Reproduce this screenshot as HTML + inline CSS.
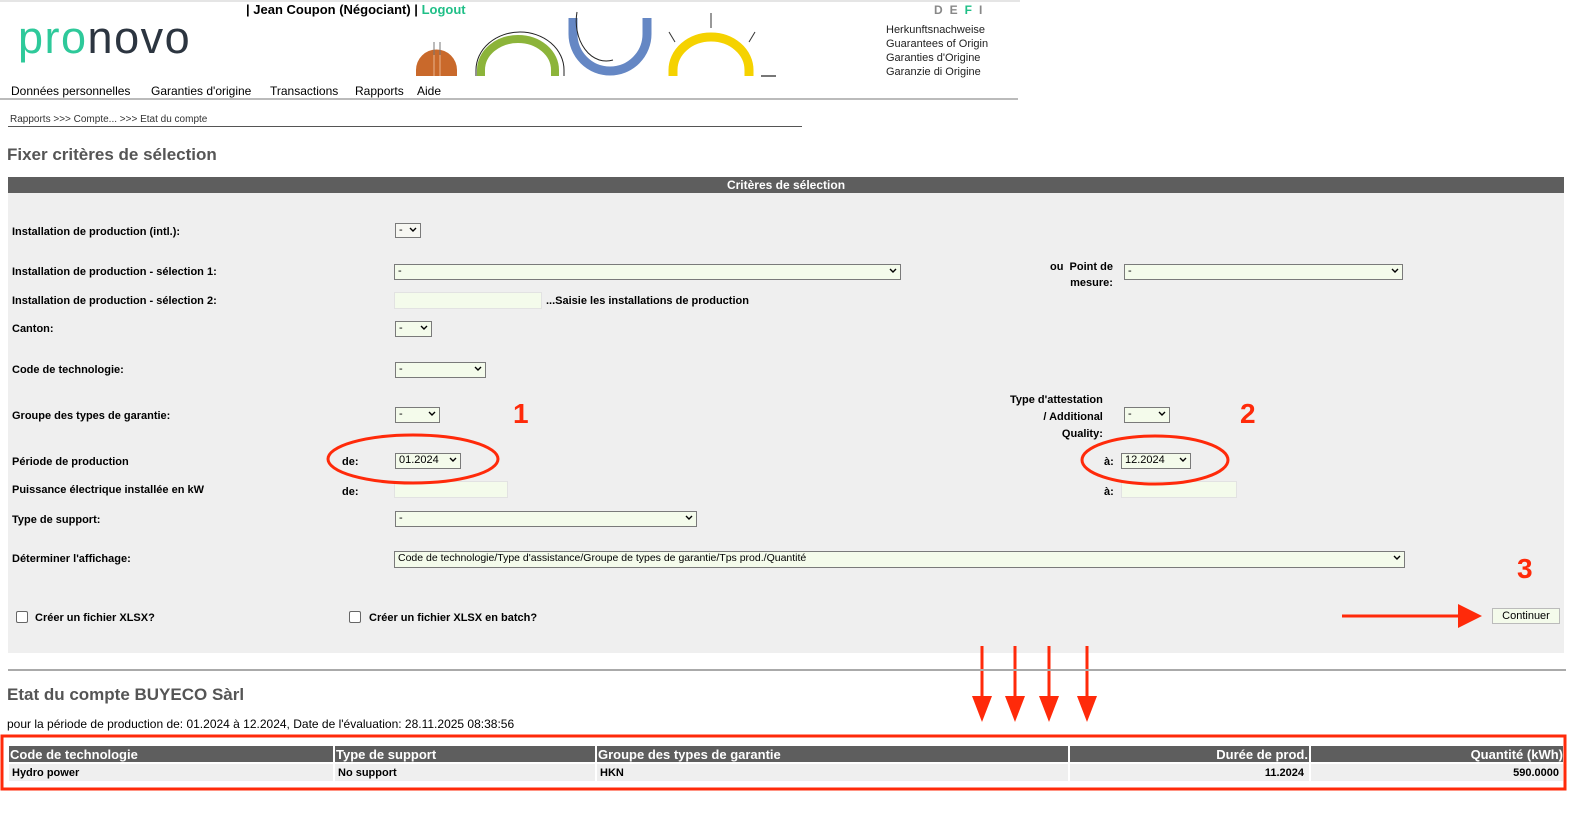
<!DOCTYPE html>
<html><head><meta charset="utf-8"><style>
*{margin:0;padding:0;box-sizing:border-box}
body{width:1584px;height:817px;background:#fff;font-family:"Liberation Sans",sans-serif;color:#000;position:relative;overflow:hidden}
.a{position:absolute;white-space:nowrap}
.b{font-weight:bold;font-size:11px}
.sel{position:absolute;border:1px solid #7a7a7a;background:#f4fbeb;font-size:11px;padding-left:3px;line-height:13px}
.sel svg{position:absolute;right:3px;top:3px}
.inp{position:absolute;border:1px solid #e2e2e2;background:#f4fbeb;height:17px}
.red{color:#ff2a0a;font-weight:bold;font-size:28px}
</style></head><body>
<div class="a" style="left:0;top:0;width:1020px;height:2px;background:#e5e5e5"></div>
<div class="a" style="left:18px;top:12px;font-size:45px;letter-spacing:1.5px;line-height:52px"><span style="color:#2ec99a">pro</span><span style="color:#2c3540">novo</span></div>
<div class="a" style="left:246px;top:2px;font-size:13px;font-weight:bold">| Jean Coupon (Négociant) | <span style="color:#1fbf87">Logout</span></div>
<svg class="a" style="left:410px;top:0" width="380" height="80">
<path d="M6 76 V70 A20 20 0 0 1 47 70 V76 Z" fill="#c9692b"/>
<line x1="24" y1="50" x2="24" y2="76" stroke="#e9b48e"/><line x1="30" y1="50" x2="30" y2="76" stroke="#e9b48e"/>
<line x1="24" y1="42" x2="24" y2="55" stroke="#777"/><line x1="30" y1="42" x2="30" y2="55" stroke="#777"/>
<path d="M71 76 V70 A37 31 0 0 1 145 70 V76" fill="none" stroke="#8cb43a" stroke-width="8"/>
<path d="M66 76 V70 A44 38 0 0 1 154 70 V76" fill="none" stroke="#222" stroke-width="1"/>
<path d="M163 18 V34 A37 37 0 0 0 237 34 V18" fill="none" stroke="#6587c4" stroke-width="9"/>
<path d="M167 12 A30 40 0 0 0 203 60" fill="none" stroke="#222" stroke-width="1"/>
<path d="M263 76 V70 A38 33 0 0 1 339 70 V76" fill="none" stroke="#f5d200" stroke-width="9"/>
<line x1="301" y1="13" x2="301" y2="28" stroke="#333"/><line x1="259" y1="32" x2="265" y2="42" stroke="#333"/><line x1="345" y1="32" x2="339" y2="42" stroke="#333"/>
<line x1="351" y1="76" x2="366" y2="76" stroke="#777" stroke-width="2"/>
</svg>
<div class="a" style="left:934px;top:3px;font-size:12px;font-weight:bold;color:#888;letter-spacing:7px">DE<span style="color:#1fbf87">F</span>I</div>
<div class="a" style="left:886px;top:23px;font-size:11px;line-height:14px;color:#222">Herkunftsnachweise<br>Guarantees of Origin<br>Garanties d'Origine<br>Garanzie di Origine</div>
<div class="a" style="left:11px;top:84px;font-size:12px">Données personnelles</div>
<div class="a" style="left:151px;top:84px;font-size:12px">Garanties d'origine</div>
<div class="a" style="left:270px;top:84px;font-size:12px">Transactions</div>
<div class="a" style="left:355px;top:84px;font-size:12px">Rapports</div>
<div class="a" style="left:417px;top:84px;font-size:12px">Aide</div>
<div class="a" style="left:0;top:98px;width:1018px;height:2px;background:#bbb"></div>
<div class="a" style="left:10px;top:114px;font-size:10px;color:#333">Rapports &gt;&gt;&gt; Compte... &gt;&gt;&gt; Etat du compte</div>
<div class="a" style="left:8px;top:126px;width:794px;height:1px;background:#555"></div>
<div class="a" style="left:7px;top:145px;font-size:17px;font-weight:bold;color:#555">Fixer critères de sélection</div>

<div class="a" style="left:8px;top:177px;width:1556px;height:476px;background:#efefef"></div>
<div class="a" style="left:8px;top:177px;width:1556px;height:16px;background:#5e5e5e;color:#fff;font-weight:bold;font-size:12px;text-align:center;line-height:16px">Critères de sélection</div>

<div class="a b" style="left:12px;top:226px">Installation de production (intl.):</div>
<div class="sel" style="left:395px;top:223px;width:26px;height:15px;background:#f7f7f2">-<svg width="8" height="6"><polyline points="1,1 4,4 7,1" fill="none" stroke="#000" stroke-width="1.4"/></svg></div>
<div class="a b" style="left:12px;top:266px">Installation de production - sélection 1:</div>
<div class="sel" style="left:394px;top:264px;width:507px;height:16px">-<svg width="8" height="6"><polyline points="1,1 4,4 7,1" fill="none" stroke="#000" stroke-width="1.4"/></svg></div>
<div class="a b" style="left:1050px;top:259px;text-align:right;line-height:16px">ou&nbsp; Point de<br>mesure:</div>
<div class="sel" style="left:1124px;top:264px;width:279px;height:16px">-<svg width="8" height="6"><polyline points="1,1 4,4 7,1" fill="none" stroke="#000" stroke-width="1.4"/></svg></div>
<div class="a b" style="left:12px;top:295px">Installation de production - sélection 2:</div>
<div class="inp" style="left:394px;top:292px;width:148px"></div>
<div class="a b" style="left:546px;top:295px">...Saisie les installations de production</div>
<div class="a b" style="left:12px;top:323px">Canton:</div>
<div class="sel" style="left:395px;top:321px;width:37px;height:16px">-<svg width="8" height="6"><polyline points="1,1 4,4 7,1" fill="none" stroke="#000" stroke-width="1.4"/></svg></div>
<div class="a b" style="left:12px;top:364px">Code de technologie:</div>
<div class="sel" style="left:395px;top:362px;width:91px;height:16px">-<svg width="8" height="6"><polyline points="1,1 4,4 7,1" fill="none" stroke="#000" stroke-width="1.4"/></svg></div>
<div class="a b" style="left:12px;top:410px">Groupe des types de garantie:</div>
<div class="sel" style="left:395px;top:407px;width:45px;height:16px">-<svg width="8" height="6"><polyline points="1,1 4,4 7,1" fill="none" stroke="#000" stroke-width="1.4"/></svg></div>
<div class="a b" style="left:1010px;top:392px;text-align:right;line-height:17px">Type d'attestation<br>/ Additional<br>Quality:</div>
<div class="sel" style="left:1124px;top:407px;width:46px;height:16px">-<svg width="8" height="6"><polyline points="1,1 4,4 7,1" fill="none" stroke="#000" stroke-width="1.4"/></svg></div>
<div class="a b" style="left:12px;top:456px">Période de production</div>
<div class="a b" style="left:342px;top:456px">de:</div>
<div class="sel" style="left:395px;top:453px;width:66px;height:16px">01.2024<svg width="8" height="6"><polyline points="1,1 4,4 7,1" fill="none" stroke="#000" stroke-width="1.4"/></svg></div>
<div class="a b" style="left:1104px;top:456px">à:</div>
<div class="sel" style="left:1121px;top:453px;width:70px;height:16px">12.2024<svg width="8" height="6"><polyline points="1,1 4,4 7,1" fill="none" stroke="#000" stroke-width="1.4"/></svg></div>
<div class="a b" style="left:12px;top:484px">Puissance électrique installée en kW</div>
<div class="a b" style="left:342px;top:486px">de:</div>
<div class="inp" style="left:394px;top:481px;width:114px"></div>
<div class="a b" style="left:1104px;top:486px">à:</div>
<div class="inp" style="left:1121px;top:481px;width:116px"></div>
<div class="a b" style="left:12px;top:514px">Type de support:</div>
<div class="sel" style="left:395px;top:511px;width:302px;height:16px">-<svg width="8" height="6"><polyline points="1,1 4,4 7,1" fill="none" stroke="#000" stroke-width="1.4"/></svg></div>
<div class="a b" style="left:12px;top:553px">Déterminer l'affichage:</div>
<div class="sel" style="left:394px;top:551px;width:1011px;height:17px;font-size:10.5px">Code de technologie/Type d'assistance/Groupe de types de garantie/Tps prod./Quantité<svg width="8" height="6"><polyline points="1,1 4,4 7,1" fill="none" stroke="#000" stroke-width="1.4"/></svg></div>
<div class="a" style="left:16px;top:611px;width:12px;height:12px;border:1px solid #666;background:#fff;border-radius:2px"></div>
<div class="a b" style="left:35px;top:612px">Créer un fichier XLSX?</div>
<div class="a" style="left:349px;top:611px;width:12px;height:12px;border:1px solid #666;background:#fff;border-radius:2px"></div>
<div class="a b" style="left:369px;top:612px">Créer un fichier XLSX en batch?</div>
<div class="a" style="left:1492px;top:608px;width:68px;height:16px;border:1px solid #bbb;background:#f4fbeb;font-size:11px;text-align:center;line-height:14px">Continuer</div>

<svg class="a" style="left:0;top:0" width="1584" height="817">
<ellipse cx="413" cy="459" rx="85" ry="24" fill="none" stroke="#ff2a0a" stroke-width="3"/>
<ellipse cx="1155" cy="460" rx="73" ry="24" fill="none" stroke="#ff2a0a" stroke-width="3"/>
<line x1="1342" y1="616" x2="1462" y2="616" stroke="#ff2a0a" stroke-width="3"/>
<polygon points="1458,604 1482,616 1458,628" fill="#ff2a0a"/>
<g stroke="#ff2a0a" stroke-width="3" fill="#ff2a0a">
<line x1="982" y1="646" x2="982" y2="700"/><polygon points="972,696 992,696 982,722" stroke="none"/>
<line x1="1015" y1="646" x2="1015" y2="700"/><polygon points="1005,696 1025,696 1015,722" stroke="none"/>
<line x1="1049" y1="646" x2="1049" y2="700"/><polygon points="1039,696 1059,696 1049,722" stroke="none"/>
<line x1="1087" y1="646" x2="1087" y2="700"/><polygon points="1077,696 1097,696 1087,722" stroke="none"/>
</g>
<rect x="2" y="736" width="1563" height="53" fill="none" stroke="#ff2a0a" stroke-width="3"/>
</svg>
<div class="a red" style="left:513px;top:398px">1</div>
<div class="a red" style="left:1240px;top:398px">2</div>
<div class="a red" style="left:1517px;top:553px">3</div>

<div class="a" style="left:8px;top:669px;width:1558px;height:2px;background:#aaa"></div>
<div class="a" style="left:7px;top:685px;font-size:17px;font-weight:bold;color:#555">Etat du compte BUYECO Sàrl</div>
<div class="a" style="left:7px;top:717px;font-size:12px">pour la période de production de: 01.2024 à 12.2024, Date de l'évaluation: 28.11.2025 08:38:56</div>
<div class="a" style="left:9px;top:746px;width:1554px;height:16px;background:#5e5e5e"></div>
<div class="a" style="left:9px;top:764px;width:1554px;height:17px;background:#efefef"></div>
<div class="a" style="left:333px;top:746px;width:2px;height:36px;background:#fff"></div>
<div class="a" style="left:595px;top:746px;width:2px;height:36px;background:#fff"></div>
<div class="a" style="left:1068px;top:746px;width:2px;height:36px;background:#fff"></div>
<div class="a" style="left:1309px;top:746px;width:2px;height:36px;background:#fff"></div>
<div class="a" style="left:10px;top:747px;font-size:13px;font-weight:bold;color:#fff">Code de technologie</div>
<div class="a" style="left:336px;top:747px;font-size:13px;font-weight:bold;color:#fff">Type de support</div>
<div class="a" style="left:598px;top:747px;font-size:13px;font-weight:bold;color:#fff">Groupe des types de garantie</div>
<div class="a" style="right:276px;top:747px;font-size:13px;font-weight:bold;color:#fff">Durée de prod.</div>
<div class="a" style="right:21px;top:747px;font-size:13px;font-weight:bold;color:#fff">Quantité (kWh)</div>
<div class="a b" style="left:12px;top:767px">Hydro power</div>
<div class="a b" style="left:338px;top:767px">No support</div>
<div class="a b" style="left:600px;top:767px">HKN</div>
<div class="a b" style="right:280px;top:767px">11.2024</div>
<div class="a b" style="right:25px;top:767px">590.0000</div>
</body></html>
